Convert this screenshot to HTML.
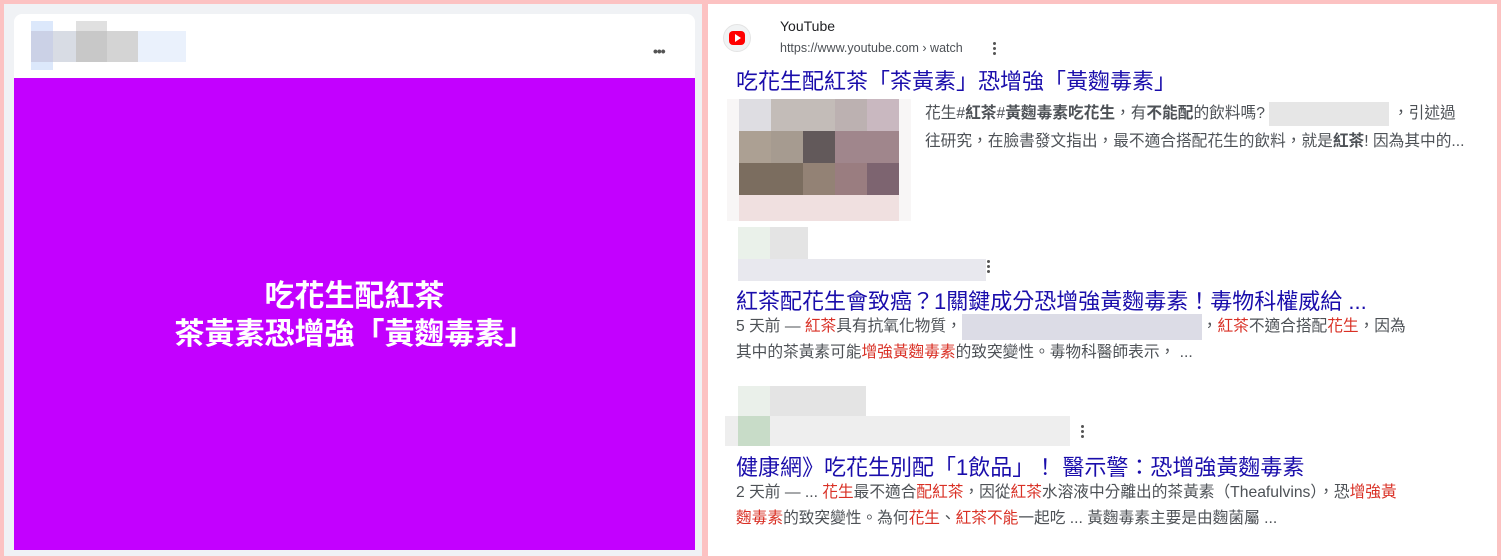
<!DOCTYPE html>
<html><head><meta charset="utf-8"><style>
*{margin:0;padding:0;box-sizing:border-box}
body{width:1501px;height:560px;background:#fcc2c2;position:relative;overflow:hidden;font-family:"Liberation Sans","Noto Sans CJK TC",sans-serif}
.a{position:absolute}
.left{left:4px;top:4px;width:698px;height:552px;background:#f0f2f5}
.card{left:14px;top:14px;width:681px;height:536px;background:#fff;border-radius:8px 8px 0 0;overflow:hidden}
.purple{left:0;top:64px;width:681px;height:472px;background:#c300ff;color:#fff;font-weight:bold;font-size:30px;text-align:center;line-height:38px;padding-top:200px}
.right{left:708px;top:4px;width:789px;height:552px;background:#fff}
.t{position:absolute;font-size:22px;color:#1a0dab;white-space:nowrap}
.s{position:absolute;font-size:15.7px;color:#4d5156;white-space:nowrap;line-height:26px}
.r{color:#d93025}
.dots{position:absolute;width:3px}
.dots i{display:block;width:3px;height:3px;border-radius:50%;background:#555;margin-bottom:2px}
</style></head><body>
<div class="a left"></div>
<div class="a card">
  <div class="a" style="left:17px;top:7px;width:22px;height:49px;background:#dce8fb"></div>
  <div class="a" style="left:17px;top:17px;width:22px;height:31px;background:#cbd1e6"></div>
  <div class="a" style="left:39px;top:17px;width:23px;height:31px;background:#d8dce4"></div>
  <div class="a" style="left:62px;top:7px;width:31px;height:10px;background:#e0e0e0"></div>
  <div class="a" style="left:62px;top:17px;width:31px;height:31px;background:#c8c8c8"></div>
  <div class="a" style="left:93px;top:17px;width:31px;height:31px;background:#d4d4d4"></div>
  <div class="a" style="left:124px;top:17px;width:48px;height:31px;background:#eaf1fc"></div>
  <div class="a" style="left:639px;top:29px;font-size:14px;color:#555;letter-spacing:-1px;font-weight:bold">•••</div>
  <div class="a purple">吃花生配紅茶<br>茶黃素恐增強「黃麴毒素」</div>
</div>
<div class="a right"></div>
<div class="a" style="left:723px;top:24px;width:28px;height:28px;border-radius:50%;background:#f1f3f4;border:1px solid #e4e4e4"></div>
<div class="a" style="left:729px;top:31px;width:16px;height:14px;border-radius:4px;background:#f00"></div>
<svg class="a" style="left:734px;top:34px" width="8" height="8"><path d="M1 0L7 4L1 8Z" fill="#fff"/></svg>
<div class="a" style="left:780px;top:18px;font-size:14px;color:#202124">YouTube</div>
<div class="a" style="left:780px;top:41px;font-size:12.5px;color:#4d5156">https://www.youtube.com › watch</div>
<div class="dots" style="left:993px;top:42px"><i></i><i></i><i></i></div>
<div class="t" style="left:736px;top:64px">吃花生配紅茶「茶黃素」恐增強「黃麴毒素」</div>
<div class="a" style="left:727px;top:99px;width:184px;height:122px;background:#f8f6f6"></div>
<div class="a" style="left:739px;top:99px;width:32px;height:32px;background:#dedde2"></div>
<div class="a" style="left:771px;top:99px;width:64px;height:32px;background:#c3bcb8"></div>
<div class="a" style="left:835px;top:99px;width:32px;height:32px;background:#bcb1b1"></div>
<div class="a" style="left:867px;top:99px;width:32px;height:32px;background:#c9b8c0"></div>
<div class="a" style="left:739px;top:131px;width:32px;height:32px;background:#aca093"></div>
<div class="a" style="left:771px;top:131px;width:32px;height:32px;background:#a69b90"></div>
<div class="a" style="left:803px;top:131px;width:32px;height:32px;background:#62595a"></div>
<div class="a" style="left:835px;top:131px;width:64px;height:32px;background:#a0868c"></div>
<div class="a" style="left:739px;top:163px;width:64px;height:32px;background:#7b6d5f"></div>
<div class="a" style="left:803px;top:163px;width:32px;height:32px;background:#938275"></div>
<div class="a" style="left:835px;top:163px;width:32px;height:32px;background:#9a7d80"></div>
<div class="a" style="left:867px;top:163px;width:32px;height:32px;background:#7d6470"></div>
<div class="a" style="left:739px;top:195px;width:160px;height:26px;background:#f0e0e0"></div>
<div class="s" style="left:925px;top:101px">花生#<b>紅茶</b>#<b>黃麴毒素吃花生</b>，有<b>不能配</b>的飲料嗎?<span style="display:inline-block;width:120px;height:24px;background:#e6e6e6;vertical-align:middle;margin:0 4px"></span>，引述過</div>
<div class="s" style="left:925px;top:129px">往研究，在臉書發文指出，最不適合搭配花生的飲料，就是<b>紅茶</b>! 因為其中的...</div>
<div class="a" style="left:738px;top:227px;width:70px;height:32px;background:#e4e4e4"></div>
<div class="a" style="left:738px;top:227px;width:32px;height:32px;background:#eaf1ea"></div>
<div class="a" style="left:738px;top:259px;width:248px;height:22px;background:#e8e8ee"></div>
<div class="dots" style="left:987px;top:260px"><i></i><i></i><i></i></div>
<div class="t" style="left:736px;top:284px">紅茶配花生會致癌？1關鍵成分恐增強黃麴毒素！毒物科權威給 ...</div>
<div class="s" style="left:736px;top:314px">5 天前 — <span class="r">紅茶</span>具有抗氧化物質，<span style="display:inline-block;width:240px;height:26px;background:#dcdce6;vertical-align:middle"></span>，<span class="r">紅茶</span>不適合搭配<span class="r">花生</span>，因為</div>
<div class="s" style="left:736px;top:340px">其中的茶黃素可能<span class="r">增強黃麴毒素</span>的致突變性。毒物科醫師表示， ...</div>
<div class="a" style="left:738px;top:386px;width:128px;height:30px;background:#e4e4e4"></div>
<div class="a" style="left:738px;top:386px;width:32px;height:30px;background:#eaf0ea"></div>
<div class="a" style="left:725px;top:416px;width:345px;height:30px;background:#eeeeee"></div>
<div class="a" style="left:738px;top:416px;width:32px;height:30px;background:#c8dcc8"></div>
<div class="dots" style="left:1081px;top:425px"><i></i><i></i><i></i></div>
<div class="t" style="left:736px;top:450px">健康網》吃花生別配「1飲品」！ 醫示警：恐增強黃麴毒素</div>
<div class="s" style="left:736px;top:480px">2 天前 — ... <span class="r">花生</span>最不適合<span class="r">配紅茶</span>，因從<span class="r">紅茶</span>水溶液中分離出的茶黃素（Theafulvins），恐<span class="r">增強黃</span></div>
<div class="s" style="left:736px;top:506px"><span class="r">麴毒素</span>的致突變性。為何<span class="r">花生</span>、<span class="r">紅茶不能</span>一起吃 ... 黃麴毒素主要是由麴菌屬 ...</div>
</body></html>
